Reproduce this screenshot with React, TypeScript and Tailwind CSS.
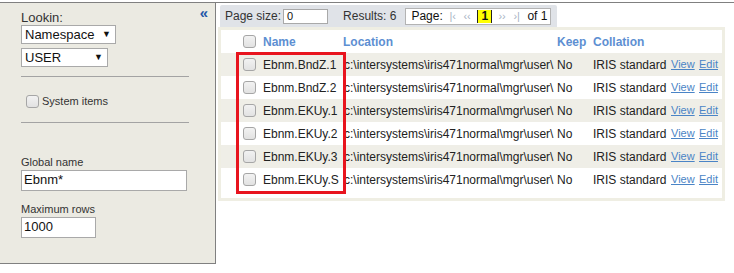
const rows = ["Ebnm.BndZ.1", "Ebnm.BndZ.2", "Ebnm.EKUy.1", "Ebnm.EKUy.2", "Ebnm.EKUy.3", "Ebnm.EKUy.S"];

function Check() {
  return <div className="h-[13px] w-[13px] rounded-[3px] border border-[#a6a6a6] bg-gradient-to-b from-[#f2f2f2] to-[#e2e2e2]" />;
}

const cols = "grid grid-cols-[42px_80px_214px_36px_78px_28px_1fr] items-center";

export default function App() {
  return (
    <div className="relative h-[273px] w-[734px] overflow-hidden bg-white font-['Liberation_Sans',Arial,sans-serif] text-[12px] text-[#222]">
      <div className="h-[2px]" />
      <div className="flex border-t border-[#808080]">
        {/* left search panel */}
        <aside className="relative h-[261px] w-[216px] shrink-0 border-r border-b border-[#808080] bg-[#ebeae2] pl-[21px] pt-[7px]">
          <button className="absolute right-[7px] top-[1px] text-[15px] font-bold leading-[18px] text-[#2356a8]">«</button>
          <div className="text-[13px] leading-[15px] text-[#333]">Lookin:</div>
          <div className="flex h-[19px] w-[95px] items-center justify-between border border-[#a9a9a9] bg-white pl-[3px] pr-[4px] text-[13px] text-[#111]">
            <span>Namespace</span>
            <span className="text-[9px]">▼</span>
          </div>
          <div className="mt-[4px] flex h-[19px] w-[87px] items-center justify-between border border-[#a9a9a9] bg-white pl-[3px] pr-[4px] text-[13px] text-[#111]">
            <span>USER</span>
            <span className="text-[9px]">▼</span>
          </div>
          <div className="mt-[9px] h-px w-[168px] bg-[#a3a3a3]" />
          <div className="mt-[16px] flex items-center pl-[5px]">
            <Check />
            <span className="ml-[3px] text-[11px] text-[#333]">System items</span>
          </div>
          <div className="mt-[12px] h-px w-[168px] bg-[#a3a3a3]" />
          <div className="mt-[33px] text-[11px] leading-[13px] text-[#333]">Global name</div>
          <div className="mt-[1px] flex h-[21px] w-[166px] items-center border border-[#a9a9a9] bg-white pl-[2px] text-[13px] text-[#111]">Ebnm*</div>
          <div className="mt-[12px] text-[11px] leading-[13px] text-[#333]">Maximum rows</div>
          <div className="mt-[1px] flex h-[21px] w-[75px] items-center border border-[#a9a9a9] bg-white pl-[2px] text-[13px] text-[#111]">1000</div>
        </aside>

        {/* results area */}
        <main className="pl-[2px] pt-[2px]">
          <div className="ml-[2px] flex h-[22px] w-[337px] items-center rounded-t-[2px] bg-[#e0e3e8] pl-[5px] text-[#333]">
            <span>Page size:</span>
            <div className="ml-[2px] flex h-[15px] w-[45px] items-center border border-[#a9a9a9] bg-white pl-[3px] text-[11px] text-[#111]">0</div>
            <span className="ml-[15px]">Results: 6</span>
            <div className="ml-[9px] flex h-[17px] w-[146px] items-center border border-[#b3b3b3] bg-white pl-[5px] text-[#111]">
              <span className="w-[38px]">Page:</span>
              <span className="w-[14px] text-[11px] text-[#a8b3c4]">|‹</span>
              <span className="w-[14px] text-[11px] text-[#a8b3c4]">‹‹</span>
              <span className="flex h-[13px] w-[15px] items-center justify-center border-x border-[#222] bg-[#ffff00] font-bold">1</span>
              <span className="ml-[6px] w-[15px] text-[11px] text-[#a8b3c4]">››</span>
              <span className="w-[14px] text-[11px] text-[#a8b3c4]">›|</span>
              <span>of 1</span>
            </div>
          </div>

          <div className="w-[507px] border-[3px] border-[#efeee3] bg-white pb-[7px]">
            <div className={`${cols} h-[23px] font-bold text-[#5d8fd2]`}>
              <div className="pl-[22px]"><Check /></div>
              <span>Name</span>
              <span>Location</span>
              <span>Keep</span>
              <span className="col-span-3">Collation</span>
            </div>
            {rows.map((name, i) => (
              <div key={name} className={`${cols} h-[23px] ${i % 2 === 0 ? "bg-[#efeee7]" : "bg-white"}`}>
                <div className="pl-[22px]"><Check /></div>
                <span className="whitespace-nowrap">{name}</span>
                <span className="overflow-hidden whitespace-nowrap pl-[1px]">c:\intersystems\iris471normal\mgr\user\</span>
                <span>No</span>
                <span className="whitespace-nowrap">IRIS standard</span>
                <a className="text-[11px] text-[#4a84c6] underline">View</a>
                <a className="text-[11px] text-[#4a84c6] underline">Edit</a>
              </div>
            ))}
          </div>
        </main>
      </div>

      {/* red highlight annotation */}
      <div className="absolute left-[236px] top-[52px] h-[142px] w-[110px] border-[3px] border-[#e8141e]" />
    </div>
  );
}
